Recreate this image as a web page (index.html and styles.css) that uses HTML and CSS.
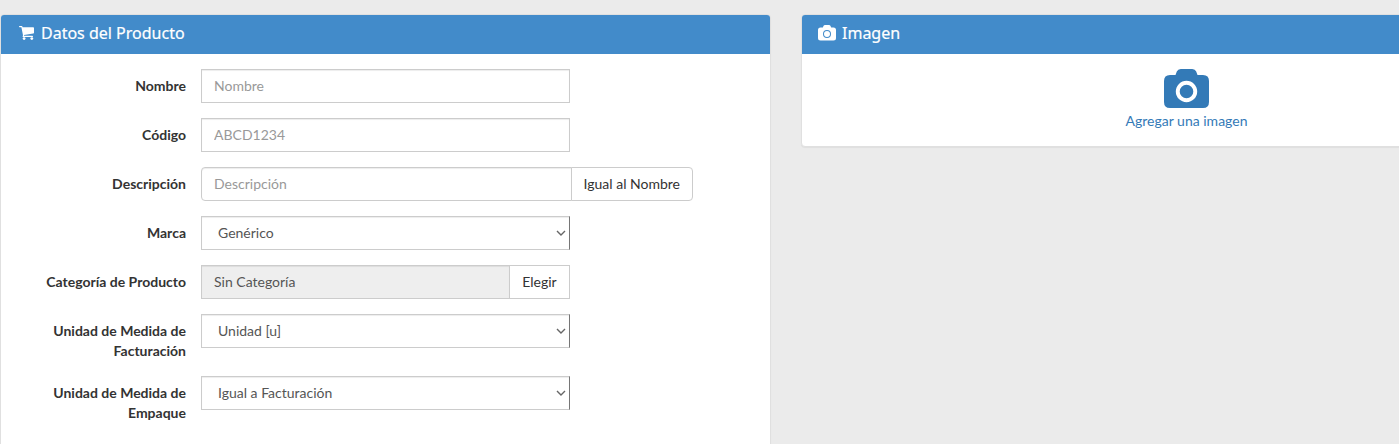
FILE: index.html
```html
<!DOCTYPE html>
<html lang="es">
<head>
<meta charset="utf-8">
<title>Datos del Producto</title>
<link rel="stylesheet" href="styles.css">
</head>
<body>
<main class="layout">
  <section class="panel product">
    <h3 class="panel-heading">
      <svg class="icon cart" viewBox="0 0 15 14"><path d="M0 .6Q0 0 .6 0h2.100q.6 0 .7.600l.2.700h10.600q.8 0 .8.700v4.700q0 .6-.7.700L5 9.100l.1.700h8.300q.6 0 .6.600t-.6.600H4.300q-.7 0-.7-.6l.4-1.200L2.400 1.300H.6Q0 1.300 0 .6z"/><circle cx="5.100" cy="12.600" r="1.400"/><circle cx="12.800" cy="12.600" r="1.400"/></svg>
      <span>Datos del Producto</span>
    </h3>
    <form class="form">
      <div class="row"><label class="label">Nombre</label><input class="control" placeholder="Nombre"></div>
      <div class="row"><label class="label">Código</label><input class="control" placeholder="ABCD1234"></div>
      <div class="row"><label class="label">Descripción</label><div class="group wide"><input class="control" placeholder="Descripción"><button type="button" class="button">Igual al Nombre</button></div></div>
      <div class="row"><label class="label">Marca</label><div class="select-wrap"><select class="control select"><option>Genérico</option></select><svg class="chevron" viewBox="0 0 10 6"><path d="M1 1l4 4 4-4"/></svg></div></div>
      <div class="row"><label class="label">Categoría de Producto</label><div class="group"><input class="control" value="Sin Categoría" readonly><button type="button" class="button square">Elegir</button></div></div>
      <div class="row"><label class="label">Unidad de Medida de Facturación</label><div class="select-wrap"><select class="control select"><option>Unidad [u]</option></select><svg class="chevron" viewBox="0 0 10 6"><path d="M1 1l4 4 4-4"/></svg></div></div>
      <div class="row"><label class="label">Unidad de Medida de Empaque</label><div class="select-wrap"><select class="control select"><option>Igual a Facturación</option></select><svg class="chevron" viewBox="0 0 10 6"><path d="M1 1l4 4 4-4"/></svg></div></div>
    </form>
  </section>
  <section class="panel image">
    <h3 class="panel-heading">
      <svg class="icon camera" viewBox="0 0 18 16"><path fill-rule="evenodd" d="M2.500 2.500h2.300l.8-1.700Q6 0 7 0h4q1 0 1.400.8l.8 1.700h2.300Q18 2.500 18 5v8q0 2.500-2.500 2.500h-13Q0 15.500 0 13V5q0-2.500 2.500-2.500zM9 4.900a4 4 0 1 0 0 8 4 4 0 0 0 0-8zm0 1a3 3 0 1 1 0 6 3 3 0 0 1 0-6z"/></svg>
      <span>Imagen</span>
    </h3>
    <a class="upload">
      <svg class="upload-icon" viewBox="0 0 45 39"><path fill-rule="evenodd" d="M6 6h5.500l1.300-3.400Q13.800 0 16.800 0h11.400q3 0 4 2.600L33.500 6H39q6 0 6 6v21q0 6-6 6H6q-6 0-6-6V12q0-6 6-6zm16.500 5.800a10.700 10.700 0 1 0 0 21.400 10.700 10.700 0 0 0 0-21.400zm0 3.900a6.800 6.800 0 1 1 0 13.600 6.800 6.800 0 0 1 0-13.600z"/></svg>
      <span>Agregar una imagen</span>
    </a>
  </section>
</main>
</body>
</html>
```
FILE: styles.css
```css
* { box-sizing: border-box; }
body { margin: 0; height: 444px; overflow: hidden; background: #ebebeb; font: 14px/20px Lato, sans-serif; color: #333; }
.layout { display: flex; align-items: flex-start; gap: 30px; height: 444px; overflow: hidden; padding-top: 14px; }
.panel { flex: none; background: #fff; border: 1px solid #e0e0e0; border-radius: 4px; box-shadow: 0 1px 1px rgba(0,0,0,.05); }
.product { width: 771px; height: 460px; }
.image { width: 771px; height: 133px; }
.panel-heading { display: flex; align-items: center; height: 39px; margin: 0; padding: 0 0 3px 17px; background: #428bca; color: #fff; border-radius: 3px 3px 0 0; font: 400 16px/18px "Noto Sans", sans-serif; }
.panel-heading span { margin-top: -1px; -webkit-text-stroke: .2px #fff; }
.icon { fill: currentColor; flex: none; }
.cart { width: 15px; height: 14px; margin: 0 7px 0 1px; }
.camera { width: 18px; height: 16px; margin: 0 6px 0 -1px; }
.form { display: flex; flex-direction: column; gap: 15px; padding-top: 15px; }
.row { display: flex; align-items: flex-start; gap: 15px; }
.label { width: 185px; padding: 7px 0 0 35px; text-align: right; font-weight: 700; }
.control { width: 369px; height: 34px; margin: 0; padding: 5px 12px 7px; background: #fff; border: 1px solid #ccc; border-radius: 0; box-shadow: inset 0 1px 1px rgba(0,0,0,.075); font: inherit; color: #555; }
.control::placeholder { color: #999; opacity: 1; }
.control[readonly] { background: #eee; }
.select-wrap { position: relative; display: flex; }
.select { appearance: none; padding: 6px 12px 6px 16px; border-right-color: #767676; }
.chevron { position: absolute; right: 4px; top: 14px; width: 10px; height: 6px; fill: none; stroke: #666; stroke-width: 1.4; pointer-events: none; }
.group { display: flex; width: 369px; }
.group .control { flex: 1; min-width: 0; }
.wide { width: 492px; }
.wide .control { border-radius: 4px 0 0 4px; }
.button { height: 34px; margin: 0 0 0 -1px; padding: 6px 12px; border: 1px solid #ccc; border-radius: 0 4px 4px 0; background: #fff; color: #333; font: inherit; }
.square { width: 61px; border-radius: 0; }
.upload { display: flex; flex-direction: column; align-items: center; padding-top: 15px; color: #337ab7; }
.upload-icon { width: 45px; height: 39px; margin-bottom: 3px; fill: currentColor; }
```
